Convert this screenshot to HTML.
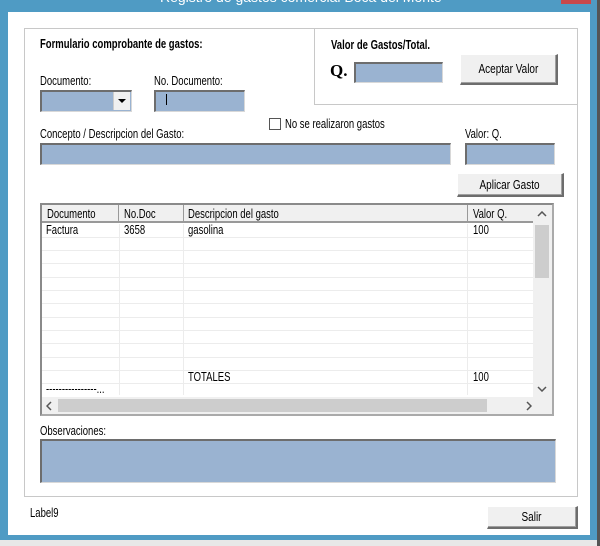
<!DOCTYPE html>
<html><head><meta charset="utf-8"><style>
*{margin:0;padding:0;box-sizing:border-box}
body{width:600px;height:546px;overflow:hidden;background:#e8e8e8;font-family:"Liberation Sans",sans-serif;font-size:11px;color:#000;position:relative}
.a{position:absolute}
.inp{position:absolute;background:#9ab3d1;border-top:2px solid #6d6d6d;border-left:2px solid #6d6d6d;border-right:1px solid #d8d8d8;border-bottom:1px solid #d8d8d8}
.btn{position:absolute;background:#f0f0f0;border:1px solid #fff;border-right:2px solid #6d6d6d;border-bottom:2px solid #6d6d6d;box-shadow:inset -1px -1px 0 #a0a0a0;text-align:center;font-size:12.5px}
.btn span{display:inline-block;transform:scaleX(0.8)}
.t{position:absolute;white-space:nowrap;font-size:12.5px;line-height:13px;transform:scaleX(0.76);transform-origin:0 0}
.b{font-weight:bold}
.vl{position:absolute;top:19px;bottom:19px;width:1px;background:#ececec}
.hl{position:absolute;left:0;width:491px;height:1px;background:#ececec}
</style></head><body>
<div class="a" style="left:0;top:0;width:598px;height:540px;background:#4f9bc4"></div>
<div class="a" style="left:597px;top:0;width:3px;height:546px;background:#555"></div>
<div class="a" style="left:561px;top:0;width:30px;height:4px;background:#c9484a"></div>
<div class="t" style="left:160px;top:-9px;font-size:14px;color:#fff;transform:none">Registro de gastos comercial Boca del Monte</div>
<div class="a" style="left:8px;top:12px;width:582px;height:523px;background:#fff"></div>
<div class="a" style="left:24px;top:28px;width:554px;height:469px;border:1px solid #c8c8c8"></div>
<div class="a" style="left:314px;top:29px;width:264px;height:76px;border-left:1px solid #c8c8c8;border-bottom:1px solid #c8c8c8"></div>

<div class="t b" style="left:40px;top:38px">Formulario comprobante de gastos:</div>
<div class="t b" style="left:331px;top:39px">Valor de Gastos/Total.</div>
<div class="t b" style="left:330px;top:62px;font-family:'Liberation Serif',serif;font-size:17px;line-height:18px;transform:none">Q.</div>
<div class="inp" style="left:354px;top:62px;width:89px;height:21px"></div>
<div class="btn" style="left:460px;top:54px;width:98px;height:31px;line-height:29px"><span>Aceptar Valor</span></div>

<div class="t" style="left:40px;top:75px">Documento:</div>
<div class="inp" style="left:40px;top:90px;width:92px;height:22px"></div>
<div class="a" style="left:113px;top:92px;width:17px;height:18px;background:#f0f0f0;border-left:1px solid #ccc"></div>
<div class="a" style="left:118px;top:99px;width:0;height:0;border-left:4px solid transparent;border-right:4px solid transparent;border-top:4px solid #000"></div>
<div class="t" style="left:154px;top:75px">No. Documento:</div>
<div class="inp" style="left:154px;top:90px;width:91px;height:22px"></div>
<div class="a" style="left:166px;top:94px;width:1px;height:11px;background:#000"></div>

<div class="a" style="left:269px;top:118px;width:12px;height:12px;border:1px solid #555;background:#fff"></div>
<div class="t" style="left:285px;top:118px">No se realizaron gastos</div>
<div class="t" style="left:40px;top:128px">Concepto / Descripcion del Gasto:</div>
<div class="inp" style="left:40px;top:143px;width:411px;height:22px"></div>
<div class="t" style="left:465px;top:128px">Valor: Q.</div>
<div class="inp" style="left:465px;top:143px;width:90px;height:22px"></div>
<div class="btn" style="left:457px;top:173px;width:107px;height:24px;line-height:22px"><span>Aplicar Gasto</span></div>

<div class="a" style="left:40px;top:203px;width:514px;height:213px;border:2px solid #8a8a8a;border-right-color:#aaa;border-bottom-color:#aaa;background:#fff;overflow:hidden">
 <div class="a" style="left:0;top:0;width:491px;height:18px;background:#f0f0f0;border-bottom:2px solid #999"></div>
 <div class="a" style="left:76px;top:0;width:1px;height:18px;background:#999"></div>
 <div class="a" style="left:141px;top:0;width:1px;height:18px;background:#999"></div>
 <div class="a" style="left:425px;top:0;width:1px;height:18px;background:#999"></div>
 <div class="t" style="left:5px;top:3px">Documento</div>
 <div class="t" style="left:82px;top:3px">No.Doc</div>
 <div class="t" style="left:146px;top:3px">Descripcion del gasto</div>
 <div class="t" style="left:431px;top:3px">Valor Q.</div>
 <div class="vl" style="left:77px"></div><div class="vl" style="left:141px"></div><div class="vl" style="left:425px"></div>
 <div class="hl" style="top:32px"></div><div class="hl" style="top:45px"></div><div class="hl" style="top:58px"></div><div class="hl" style="top:72px"></div><div class="hl" style="top:85px"></div><div class="hl" style="top:98px"></div><div class="hl" style="top:112px"></div><div class="hl" style="top:125px"></div><div class="hl" style="top:138px"></div><div class="hl" style="top:152px"></div><div class="hl" style="top:165px"></div><div class="hl" style="top:178px"></div>
 <div class="t" style="left:4px;top:19px">Factura</div>
 <div class="t" style="left:82px;top:19px">3658</div>
 <div class="t" style="left:146px;top:19px">gasolina</div>
 <div class="t" style="left:431px;top:19px">100</div>
 <div class="t" style="left:146px;top:166px">TOTALES</div>
 <div class="t" style="left:431px;top:166px">100</div>
 <div class="t" style="left:4px;top:178px">----------------...</div>
 <div class="a" style="left:491px;top:0;width:21px;height:192px;background:#f0f0f0"></div>
 <div class="a" style="left:493px;top:20px;width:14px;height:53px;background:#cdcdcd"></div>
 <svg class="a" style="left:495px;top:6px" width="10" height="6"><path d="M1 5 L5 1 L9 5" fill="none" stroke="#555" stroke-width="1.5"/></svg>
 <svg class="a" style="left:495px;top:181px" width="10" height="6"><path d="M1 1 L5 5 L9 1" fill="none" stroke="#555" stroke-width="1.5"/></svg>
 <div class="a" style="left:0;top:192px;width:512px;height:17px;background:#f0f0f0"></div>
 <div class="a" style="left:16px;top:194px;width:429px;height:13px;background:#cdcdcd"></div>
 <svg class="a" style="left:4px;top:196px" width="6" height="10"><path d="M5 1 L1 5 L5 9" fill="none" stroke="#555" stroke-width="1.5"/></svg>
 <svg class="a" style="left:484px;top:196px" width="6" height="10"><path d="M1 1 L5 5 L1 9" fill="none" stroke="#555" stroke-width="1.5"/></svg>
</div>

<div class="t" style="left:40px;top:425px">Observaciones:</div>
<div class="inp" style="left:40px;top:439px;width:516px;height:44px"></div>
<div class="t" style="left:30px;top:507px">Label9</div>
<div class="btn" style="left:487px;top:506px;width:91px;height:23px;line-height:21px"><span>Salir</span></div>
</body></html>
